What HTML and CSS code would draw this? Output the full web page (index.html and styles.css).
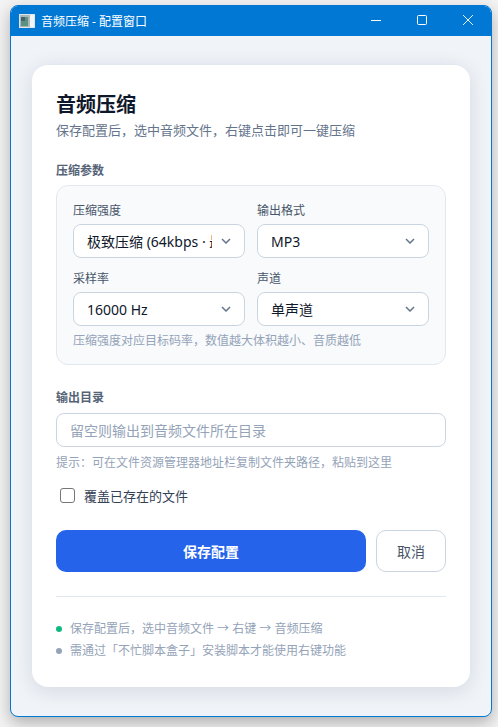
FILE: index.html
```html
<!DOCTYPE html>
<html lang="zh-CN">
<head>
<meta charset="utf-8">
<title>音频压缩 - 配置窗口</title>
<link rel="stylesheet" href="styles.css">
</head>
<body>
<div class="window">
  <header class="titlebar">
    <svg class="app-icon" width="16" height="14" viewBox="0 0 16 14">
      <rect width="16" height="14" fill="#dfe4e8"/>
      <rect x="1" y="1" width="10" height="12" fill="#a9b8b8"/>
      <rect x="2" y="3" width="7" height="9" fill="#5c9080"/>
      <rect x="2" y="3" width="4" height="4" fill="#47606e"/>
      <rect x="11" y="1" width="4" height="12" fill="#f2f5f7"/>
    </svg>
    <span class="title-text">音频压缩 - 配置窗口</span>
    <div class="controls">
      <span class="ctl"><svg width="10" height="10" viewBox="0 0 10 10"><path d="M0 5.5h10" stroke="#fff" fill="none"/></svg></span>
      <span class="ctl"><svg width="10" height="10" viewBox="0 0 10 10"><rect x=".5" y=".5" width="9" height="9" rx="1" stroke="#fff" fill="none"/></svg></span>
      <span class="ctl"><svg width="10" height="10" viewBox="0 0 10 10"><path d="M0 0l10 10M10 0L0 10" stroke="#fff" stroke-width=".9" fill="none"/></svg></span>
    </div>
  </header>
  <main class="content">
    <section class="card">
      <h1 class="heading">音频压缩</h1>
      <p class="subtitle">保存配置后，选中音频文件，右键点击即可一键压缩</p>

      <h2 class="section-label">压缩参数</h2>
      <div class="panel">
        <div class="grid">
          <div class="field">
            <label class="field-label">压缩强度</label>
            <div class="select-wrap">
              <select class="select"><option>极致压缩 (64kbps · 最小体积)</option></select>
              <svg class="chev" width="10" height="6" viewBox="0 0 10 6"><path d="M1 1l4 4 4-4" stroke="#64748b" stroke-width="1.5" fill="none"/></svg>
            </div>
          </div>
          <div class="field">
            <label class="field-label">输出格式</label>
            <div class="select-wrap">
              <select class="select"><option>MP3</option></select>
              <svg class="chev" width="10" height="6" viewBox="0 0 10 6"><path d="M1 1l4 4 4-4" stroke="#64748b" stroke-width="1.5" fill="none"/></svg>
            </div>
          </div>
          <div class="field">
            <label class="field-label">采样率</label>
            <div class="select-wrap">
              <select class="select"><option>16000 Hz</option></select>
              <svg class="chev" width="10" height="6" viewBox="0 0 10 6"><path d="M1 1l4 4 4-4" stroke="#64748b" stroke-width="1.5" fill="none"/></svg>
            </div>
          </div>
          <div class="field">
            <label class="field-label">声道</label>
            <div class="select-wrap">
              <select class="select"><option>单声道</option></select>
              <svg class="chev" width="10" height="6" viewBox="0 0 10 6"><path d="M1 1l4 4 4-4" stroke="#64748b" stroke-width="1.5" fill="none"/></svg>
            </div>
          </div>
        </div>
        <p class="panel-hint">压缩强度对应目标码率，数值越大体积越小、音质越低</p>
      </div>

      <h2 class="section-label output-label">输出目录</h2>
      <input class="text-input" type="text" placeholder="留空则输出到音频文件所在目录">
      <p class="hint">提示：可在文件资源管理器地址栏复制文件夹路径，粘贴到这里</p>

      <label class="check-row">
        <input class="checkbox" type="checkbox">
        <span class="check-text">覆盖已存在的文件</span>
      </label>

      <div class="actions">
        <button class="btn-primary" type="button">保存配置</button>
        <button class="btn-secondary" type="button">取消</button>
      </div>

      <ul class="notes">
        <li class="note"><span class="dot dot-green"></span>保存配置后，选中音频文件 → 右键 → 音频压缩</li>
        <li class="note"><span class="dot dot-gray"></span>需通过「不忙脚本盒子」安装脚本才能使用右键功能</li>
      </ul>
    </section>
  </main>
</div>
</body>
</html>
```

FILE: styles.css
```css
* { box-sizing: border-box; }
html, body { margin: 0; height: 100%; }
body {
  background: #f3f3f3;
  padding: 5px 6px 10px 10px;
  font-family: "Noto Sans", "Noto Sans CJK SC", sans-serif;
  overflow: hidden;
}
.window {
  width: 482px;
  height: 712px;
  border: 1px solid #0078d4;
  border-radius: 8px;
  background: #f0f4f9;
  overflow: hidden;
  box-shadow: 0 6px 16px rgba(0,0,0,.28);
  display: flex;
  flex-direction: column;
}
.titlebar {
  height: 30px;
  flex: none;
  background: #0078d4;
  display: flex;
  align-items: center;
  padding-left: 8px;
  color: #fff;
}
.app-icon { margin-right: 6px; margin-bottom: 1px; }
.title-text { font-size: 12px; margin-bottom: 1px; }
.controls { margin-left: auto; display: flex; margin-bottom: 2px; }
.ctl { width: 46px; display: flex; justify-content: center; }
.content { flex: 1; padding: 28px 21px 0; }
.card {
  height: 623px;
  background: #fff;
  border-radius: 16px;
  padding: 26px 24px 24px;
  border-top: 1px solid #e2e8f0;
  box-shadow: 0 4px 20px rgba(15,23,42,.12);
}
.heading { margin: 0; font-size: 20px; line-height: 28px; font-weight: 700; color: #0f172a; }
.subtitle { margin: 1px 0 0; font-size: 13px; line-height: 20px; color: #64748b; }
.section-label { margin: 22px 0 0; font-size: 12px; line-height: 18px; font-weight: 600; color: #556377; }
.panel {
  margin-top: 5px;
  height: 180px;
  background: #f8fafc;
  border: 1px solid #e2e8f0;
  border-radius: 12px;
  padding: 16px;
}
.grid { display: grid; grid-template-columns: 172px 172px; column-gap: 12px; row-gap: 12px; }
.field { display: flex; flex-direction: column; gap: 4px; }
.field-label { font-size: 12px; line-height: 18px; color: #475569; }
.select-wrap { position: relative; height: 34px; }
.select {
  appearance: none;
  display: block;
  width: 100%;
  height: 34px;
  border: 1px solid #cbd5e1;
  border-radius: 8px;
  background: #fff;
  padding: 0 32px 0 13px;
  font-family: inherit;
  font-size: 14px;
  color: #0f172a;
  outline: none;
}
.chev { position: absolute; right: 14px; top: 14px; pointer-events: none; }
.panel-hint { margin: 6px 0 0; font-size: 12px; line-height: 18px; color: #94a3b8; }
.output-label { margin-top: 24px; }
.text-input {
  display: block;
  margin-top: 6px;
  width: 100%;
  height: 34px;
  border: 1px solid #cbd5e1;
  border-radius: 8px;
  background: #fff;
  padding: 0 13px;
  font: 14px "Noto Sans", "Noto Sans CJK SC", sans-serif;
  outline: none;
}
.text-input::placeholder { color: #94a3b8; opacity: 1; }
.hint { margin: 7px 0 0; font-size: 12px; line-height: 18px; color: #94a3b8; }
.check-row { display: flex; align-items: center; margin: 13px 0 0 4px; height: 20px; gap: 9px; }
.checkbox { appearance: none; margin: 0; width: 15px; height: 15px; border: 1px solid #767676; border-radius: 3px; background: #fff; }
.check-text { font-size: 13px; color: #334155; }
.actions { display: flex; gap: 10px; margin-top: 25px; }
.btn-primary, .btn-secondary {
  height: 42px;
  border-radius: 10px;
  font-family: inherit;
  font-size: 14px;
  cursor: pointer;
}
.btn-primary { flex: 1; border: 0; background: #2563eb; color: #fff; font-weight: 700; }
.btn-secondary { width: 70px; background: #fff; border: 1px solid #cbd5e1; color: #475569; }
.notes { list-style: none; margin: 24px 0 0; padding: 21px 0 0; border-top: 1px solid #e2e8f0; }
.note { display: flex; align-items: center; font-size: 12px; line-height: 22px; color: #94a3b8; }
.dot { width: 6px; height: 6px; border-radius: 50%; margin-right: 8px; flex: none; }
.dot-green { background: #10b981; }
.dot-gray { background: #94a3b8; }
```
